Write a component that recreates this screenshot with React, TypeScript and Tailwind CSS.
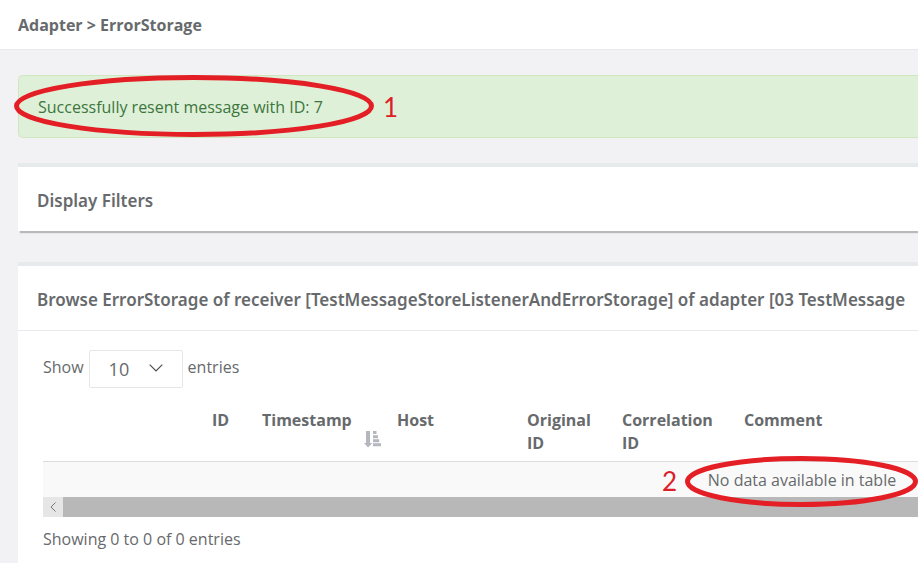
import React from "react";

const columns = [
  { label: "", width: "w-[159px]" },
  { label: "ID", width: "w-[50px]" },
  { label: "Timestamp", width: "w-[135px]", sorted: true },
  { label: "Host", width: "w-[130px]" },
  { label: "Original ID", width: "w-[95px]" },
  { label: "Correlation ID", width: "w-[122px]" },
  { label: "Comment", width: "w-auto" },
];

function SortIcon() {
  return (
    <svg
      className="absolute right-[6px] bottom-[13px] h-[17px] w-[17px] fill-[#b4b7bf]"
      viewBox="0 0 17 17"
      aria-hidden="true"
    >
      <path d="M2 0h4v12h2.500L4 16.500 0 12h2z" />
      <path d="M9 0h3.500v3H9zM9 4.300h5v3H9zM9 8.300h6.200v3H9zM9 12.300h8v3H9z" />
    </svg>
  );
}

function Ring({ className, width, height }: { className: string; width: number; height: number }) {
  return (
    <svg
      className={`pointer-events-none absolute ${className}`}
      width={width}
      height={height}
      viewBox={`0 0 ${width} ${height}`}
      aria-hidden="true"
    >
      <ellipse
        cx={width / 2}
        cy={height / 2}
        rx={width / 2 - 2.5}
        ry={height / 2 - 2.5}
        fill="none"
        stroke="#e41e25"
        strokeWidth="5"
      />
    </svg>
  );
}

export default function App() {
  return (
    <div className="min-h-screen overflow-hidden bg-[#f2f2f4] font-['Open_Sans','Noto_Sans',sans-serif] text-base leading-[23px] text-[#676a6c]">
      <header className="border-b border-[#e7eaec] bg-white px-[18px] pt-[14px] pb-3">
        <h1 className="font-bold">Adapter &gt; ErrorStorage</h1>
      </header>

      <main className="pt-[25px] pl-[18px]">
        <div
          role="status"
          className="relative rounded-l-[5px] border border-r-0 border-[#d0e6be] bg-[#dff0d8] px-[19px] pt-5 pb-[18px] text-[#3c763d]"
        >
          Successfully resent message with ID: 7
          <Ring className="-top-px -left-[5px]" width={360} height={62} />
          <span className="absolute top-[15px] left-[364px] font-[Lato,sans-serif] text-[26px] leading-8 text-[#dc2028]">
            1
          </span>
        </div>

        <section className="mt-[25px] border-t-4 border-[#e7eaec] bg-white px-[19px] pt-[22px] pb-[19px] shadow-[2px_2px_1px_#b8b9bc]">
          <h2 className="font-['Noto_Sans','Open_Sans',sans-serif] text-[17px] leading-[23px] font-semibold">
            Display Filters
          </h2>
        </section>

        <section className="mt-[31px] border-t-4 border-[#e7eaec] bg-white pb-8">
          <div className="overflow-hidden border-b border-[#e7eaec] px-[19px] pt-[22px] pb-[19px]">
            <h2 className="font-['Noto_Sans','Open_Sans',sans-serif] text-[17px] leading-[23px] font-semibold whitespace-nowrap">
              Browse ErrorStorage of receiver [TestMessageStoreListenerAndErrorStorage] of adapter [03
              TestMessage
            </h2>
          </div>

          <div className="pt-[19px] pl-[25px]">
            <div className="flex gap-[5px]">
              <label htmlFor="page-length" className="pt-[6px]">
                Show
              </label>
              <div className="relative">
                <select
                  id="page-length"
                  defaultValue="10"
                  className="block h-[38px] w-[94px] appearance-none rounded-[2px] border border-[#e5e6e7] bg-white pl-[19px] text-lg text-[#676a6c]"
                >
                  <option>10</option>
                  <option>25</option>
                  <option>50</option>
                  <option>100</option>
                </select>
                <svg
                  className="pointer-events-none absolute top-[14px] right-5 h-2 w-[14px]"
                  viewBox="0 0 14 8"
                  fill="none"
                  stroke="#4a4d50"
                  strokeWidth="1.2"
                  aria-hidden="true"
                >
                  <path d="M.7.7 7 7 13.300.7" />
                </svg>
              </div>
              <span className="pt-[6px]">entries</span>
            </div>

            <div className="relative mt-[11px]">
              <div className="overflow-hidden">
                <table className="w-[1518px] table-fixed border-collapse">
                  <thead>
                    <tr className="border-b border-[#dddddd] text-left align-top">
                      {columns.map((c) => (
                        <th key={c.label} className={`relative px-[10px] pt-[10px] pb-[6px] font-bold ${c.width}`}>
                          {c.label}
                          {c.sorted && <SortIcon />}
                        </th>
                      ))}
                    </tr>
                  </thead>
                  <tbody>
                    <tr className="bg-[#f9f9f9]">
                      <td colSpan={7} className="pt-[7px] pb-[5px] text-center">
                        No data available in table
                      </td>
                    </tr>
                  </tbody>
                </table>
              </div>
              <div className="flex h-5 bg-[#b8b8b8]">
                <button
                  type="button"
                  aria-label="Scroll left"
                  className="flex w-5 items-center justify-center bg-[#e6e6e6]"
                >
                  <svg width="6" height="10" viewBox="0 0 6 10" fill="none" stroke="#777" aria-hidden="true">
                    <path d="M5.500.5 1 5l4.500 4.500" />
                  </svg>
                </button>
              </div>
              <Ring className="top-[57px] left-[642px]" width={233} height={51} />
              <span className="absolute top-[66px] left-[619px] font-[Lato,sans-serif] text-[26px] leading-8 text-[#dc2028]">
                2
              </span>
            </div>

            <p className="mt-[11px]">Showing 0 to 0 of 0 entries</p>
          </div>
        </section>
      </main>
    </div>
  );
}
